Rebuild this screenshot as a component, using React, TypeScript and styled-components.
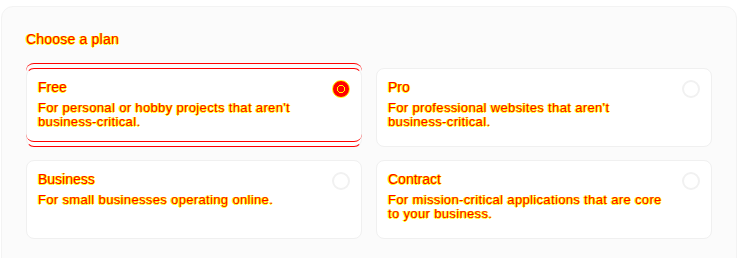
import React, { useState } from "react";
import styled, { createGlobalStyle, css } from "styled-components";

const Global = createGlobalStyle`
  html, body { margin: 0; padding: 0; background: #ffffff; }
  body { font-family: "Liberation Sans", Arial, sans-serif; }
`;

const diffText = css`
  color: #ff0000;
  text-shadow: 1px 0 #ffff00, -1px 0 #ffff00, 0 1px #ffff00;
`;

const Panel = styled.section`
  margin: 6px 0 0 1px;
  width: 736px;
  height: 280px;
  box-sizing: border-box;
  padding: 24px 25px 0 24px;
  background: #fbfbfb;
  border: 1px solid #f3f3f3;
  border-radius: 12px;
`;

const Heading = styled.h2`
  margin: 0 0 20px;
  font-size: 14px;
  line-height: 17px;
  font-weight: 400;
  letter-spacing: 0.2px;
  ${diffText}
`;

const Grid = styled.div`
  display: grid;
  grid-template-columns: 336px 336px;
  column-gap: 14px;
  row-gap: 13px;
`;

const Card = styled.label<{ $selected: boolean }>`
  position: relative;
  display: flex;
  justify-content: space-between;
  align-items: flex-start;
  height: 79px;
  box-sizing: border-box;
  padding: 10px 11px 10px 11px;
  background: #ffffff;
  border: 1px solid #f0f0f0;
  border-radius: 8px;
  cursor: pointer;
  ${(p) =>
    p.$selected &&
    css`
      border-top-color: #ff0000;
      border-bottom-color: #ff0000;
      &::before {
        content: "";
        position: absolute;
        left: -1px;
        right: -1px;
        top: -6px;
        bottom: 4px;
        border-top: 1px solid #ff0000;
        border-bottom: 1px solid #ff0000;
        border-radius: 8px;
        pointer-events: none;
      }
    `}
`;

const Body = styled.div`
  display: flex;
  flex-direction: column;
  gap: 6px;
  max-width: 278px;
`;

const Name = styled.span`
  font-size: 14px;
  line-height: 16px;
  ${diffText}
`;

const Desc = styled.span`
  font-size: 13px;
  line-height: 14px;
  letter-spacing: 0.35px;
  ${diffText}
`;

const Radio = styled.span<{ $checked: boolean }>`
  flex: none;
  width: 18px;
  height: 18px;
  box-sizing: border-box;
  border-radius: 50%;
  margin-top: 1px;
  border: 2px solid #f1f1f1;
  background: #ffffff;
  ${(p) =>
    p.$checked &&
    css`
      border: 1px solid #ffff00;
      background: radial-gradient(circle, #ff0000 0 3px, #ffff00 3px 4px, #ff0000 4px);
    `}
`;

const plans = [
  { id: "free", name: "Free", desc: "For personal or hobby projects that aren't business-critical." },
  { id: "pro", name: "Pro", desc: "For professional websites that aren't business-critical." },
  { id: "business", name: "Business", desc: "For small businesses operating online." },
  { id: "contract", name: "Contract", desc: "For mission-critical applications that are core to your business." },
];

export default function App() {
  const [selected, setSelected] = useState("free");
  return (
    <>
      <Global />
      <Panel>
        <Heading>Choose a plan</Heading>
        <Grid role="radiogroup">
          {plans.map((p) => (
            <Card key={p.id} $selected={selected === p.id} onClick={() => setSelected(p.id)}>
              <Body>
                <Name>{p.name}</Name>
                <Desc>{p.desc}</Desc>
              </Body>
              <Radio $checked={selected === p.id} role="radio" aria-checked={selected === p.id} />
            </Card>
          ))}
        </Grid>
      </Panel>
    </>
  );
}
